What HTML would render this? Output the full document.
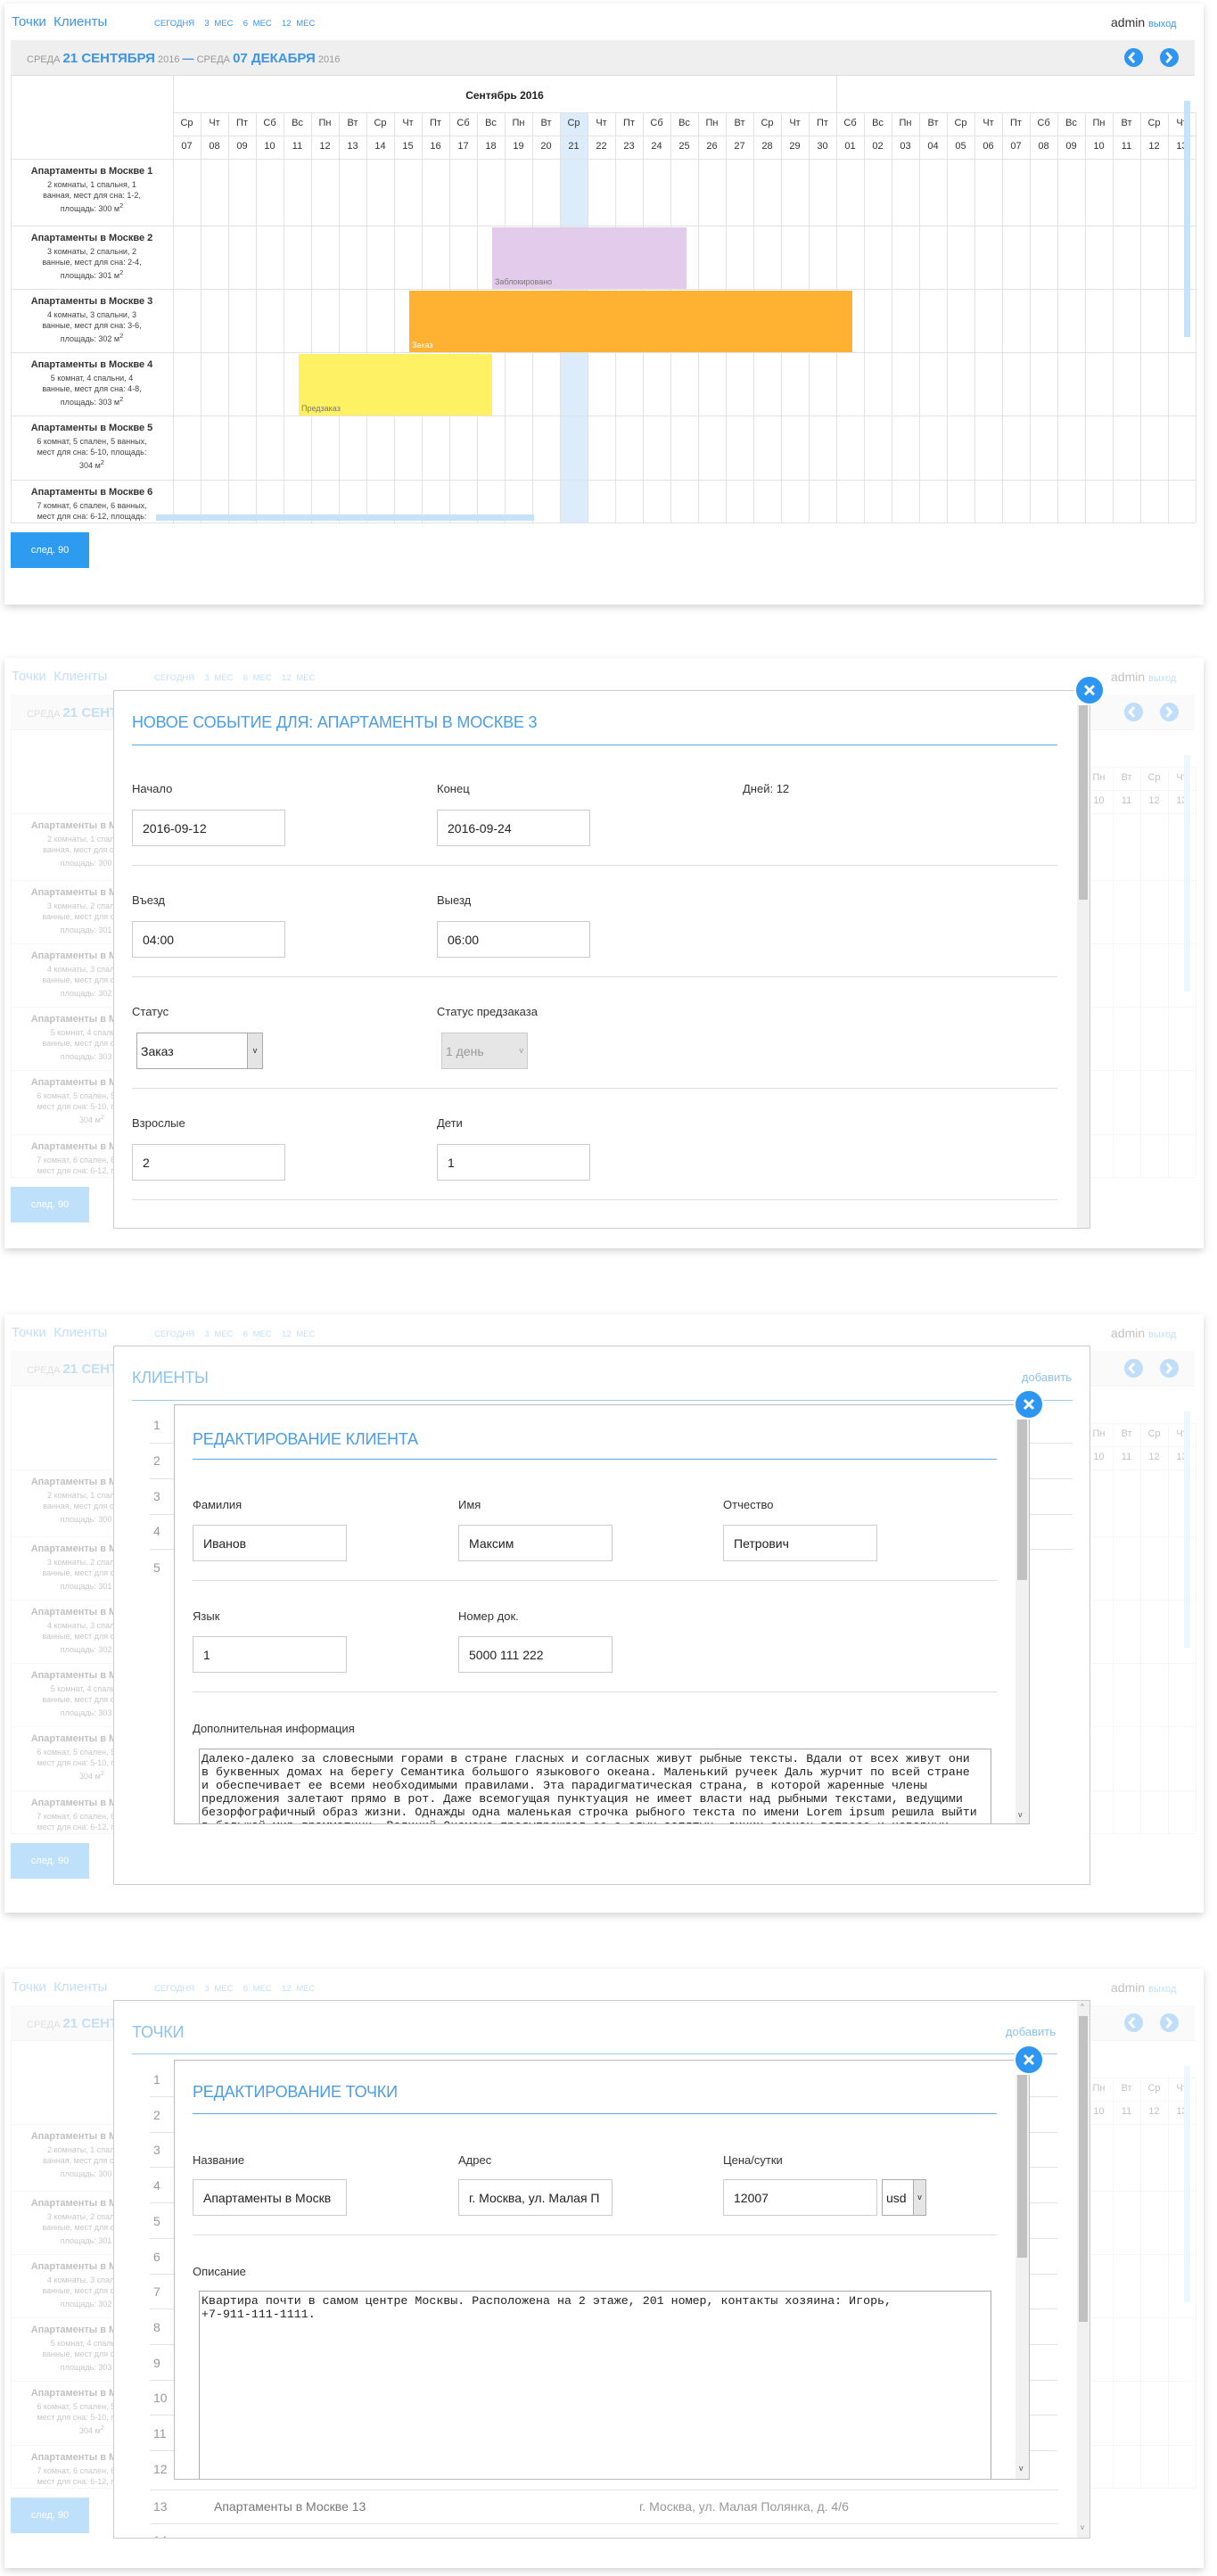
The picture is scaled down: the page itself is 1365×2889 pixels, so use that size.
<!DOCTYPE html>
<html><head><meta charset="utf-8">
<style>
*{box-sizing:border-box;margin:0;padding:0}
body{width:1365px;height:2889px;background:#fff;position:relative;overflow:hidden;font-family:"Liberation Sans","DejaVu Sans",sans-serif;color:#333}
.a{position:absolute}
.card{position:absolute;left:5px;width:1345px;background:#fff;box-shadow:0 3px 8px rgba(0,0,0,.18);overflow:hidden}
.blue{color:#3d94e6}
.lbl{position:absolute;font-size:13px;color:#333}
.inp{position:absolute;border:1px solid #ccc;background:#fff;font-size:14px;padding-left:11px;display:flex;align-items:center;color:#222;white-space:nowrap;overflow:hidden}
.sep{position:absolute;height:1px;background:#ddd}
.modal{position:absolute;background:#fff;border:1px solid #ccc}
.mt{position:absolute;font-size:18px;color:#4a9de6;font-weight:300;letter-spacing:-.2px}
.bl{position:absolute;height:1px;background:#5aa8e8}
.close{position:absolute;width:34px;height:34px;border-radius:50%;background:#2d95f2;border:2px solid #fff}
.close svg{position:absolute;left:7px;top:7px}
.sb{position:absolute;background:#f1f1f1}
.sb i{position:absolute;left:2px;right:2px;background:#c1c1c1;display:block}
.num{position:absolute;font-size:14px;color:#999;left:172px}
.nl{position:absolute;left:168px;height:1px;background:#e2e2e2}
pre{font-family:"Liberation Mono",monospace;font-size:13.3px;line-height:15px;color:#222}
</style></head><body>

<div id="c1" class="card" style="top:4px;height:674px"></div>
<div id="c2" class="card" style="top:738px;height:662px"></div>
<div id="c3" class="card" style="top:1474px;height:671px"></div>
<div id="c4" class="card" style="top:2208px;height:672px"></div>

<script>
var names=["Ср","Чт","Пт","Сб","Вс","Пн","Вт"];
var rows=[["Апартаменты в Москве 1","2 комнаты, 1 спальня, 1<br>ванная, мест для сна: 1-2,<br>площадь: 300 м<sup>2</sup>"],
["Апартаменты в Москве 2","3 комнаты, 2 спальни, 2<br>ванные, мест для сна: 2-4,<br>площадь: 301 м<sup>2</sup>"],
["Апартаменты в Москве 3","4 комнаты, 3 спальни, 3<br>ванные, мест для сна: 3-6,<br>площадь: 302 м<sup>2</sup>"],
["Апартаменты в Москве 4","5 комнат, 4 спальни, 4<br>ванные, мест для сна: 4-8,<br>площадь: 303 м<sup>2</sup>"],
["Апартаменты в Москве 5","6 комнат, 5 спален, 5 ванных,<br>мест для сна: 5-10, площадь:<br>304 м<sup>2</sup>"],
["Апартаменты в Москве 6","7 комнат, 6 спален, 6 ванных,<br>мест для сна: 6-12, площадь:<br>305 м<sup>2</sup>"]];
var rowY=[174,249,320,391,462,534,582];
function build(id,faded){
 var c=document.getElementById(id),h='';
 var op=faded?'opacity:.3;':'';
 h+='<div class="a" style="'+op+'left:0;top:0;width:1345px;height:640px">';
 h+='<div class="a blue" style="left:8px;top:12px;font-size:15px">Точки&nbsp;&nbsp;Клиенты</div>';
 h+='<div class="a blue" style="left:168px;top:17px;font-size:9.5px;word-spacing:3px;white-space:nowrap">СЕГОДНЯ&nbsp; 3 МЕС&nbsp; 6 МЕС&nbsp; 12 МЕС</div>';
 h+='<div class="a" style="left:1241px;top:13px;font-size:14px;color:#333">admin <span class="blue" style="font-size:11px">выход</span></div>';
 h+='<div class="a" style="left:7px;top:41px;width:1328px;height:40px;background:#efefef;border-bottom:1px solid #ddd"></div>';
 h+='<div class="a" style="left:25px;top:53px;font-size:11px;color:#999;white-space:nowrap">СРЕДА <b class="blue" style="font-size:15px">21 СЕНТЯБРЯ</b> 2016 <b class="blue" style="font-size:13px">—</b> СРЕДА <b class="blue" style="font-size:15px">07 ДЕКАБРЯ</b> 2016</div>';
 ['M9 4L5 8.5 9 13','M6 4l4 4.5L6 13'].forEach(function(p,i){h+='<svg class="a" style="left:'+(1256+i*40)+'px;top:50px" width="21" height="21" viewBox="0 0 17 17"><circle cx="8.5" cy="8.5" r="8.5" fill="#2d95f2"/><path d="'+p+'" stroke="#fff" stroke-width="2.4" fill="none"/></svg>';});
 var gl=189;
 h+='<div class="a" style="left:'+(gl+434)+'px;top:122px;width:31px;height:460px;background:#dcecfb"></div>';
 for(var i=0;i<=37;i++){var x=gl+i*31;h+='<div class="a" style="left:'+x+'px;top:'+(i==24||i==0?81:122)+'px;width:1px;height:'+(582-(i==24||i==0?81:122))+'px;background:#e2e2e2"></div>';}
 h+='<div class="a" style="left:7px;top:81px;width:1px;height:501px;background:#e2e2e2"></div>';
 [122,148,174].forEach(function(y){h+='<div class="a" style="left:'+gl+'px;top:'+y+'px;width:1147px;height:1px;background:#e2e2e2"></div>';});
 rowY.forEach(function(y){h+='<div class="a" style="left:7px;top:'+y+'px;width:1329px;height:1px;background:#e2e2e2"></div>';});
 h+='<div class="a" style="left:547px;top:251px;width:218px;height:69px;background:#e3cbec"></div><div class="a" style="left:550px;top:307px;font-size:9px;color:#777">Заблокировано</div>';
 h+='<div class="a" style="left:454px;top:322px;width:497px;height:69px;background:#ffb132"></div><div class="a" style="left:457px;top:378px;font-size:9px;color:#fff">Заказ</div>';
 h+='<div class="a" style="left:330px;top:393px;width:217px;height:69px;background:#fff064"></div><div class="a" style="left:333px;top:449px;font-size:9px;color:#777">Предзаказ</div>';
 h+='<div class="a" style="left:'+gl+'px;top:96px;width:744px;text-align:center;font-size:12px;font-weight:bold;color:#222">Сентябрь 2016</div>';
 for(var i=0;i<37;i++){var d=i<24?i+7:i-23;d=(d<10?'0':'')+d;var x=gl+i*31;
  h+='<div class="a" style="left:'+x+'px;top:128px;width:31px;text-align:center;font-size:11px">'+names[i%7]+'</div>';
  h+='<div class="a" style="left:'+x+'px;top:154px;width:31px;text-align:center;font-size:11px">'+d+'</div>';}
 rows.forEach(function(r,k){h+='<div class="a" style="left:7px;top:'+(rowY[k]+8)+'px;width:182px;text-align:center;line-height:12px;height:'+(rowY[k+1]-rowY[k]-8)+'px;overflow:hidden"><div style="font-size:11px;font-weight:bold;color:#333;margin-bottom:3px">'+r[0]+'</div><div style="font-size:9px;color:#444;line-height:12px">'+r[1]+'</div></div>';});
 h+='<div class="a" style="left:170px;top:573px;width:424px;height:7px;background:#c5e2fb"></div>';
 h+='<div class="a" style="left:1323px;top:109px;width:7px;height:265px;background:#c5e2fb"></div>';
 h+='<div class="a" style="left:7px;top:593px;width:88px;height:40px;background:#2d9bf0;color:#fff;font-size:11px;display:flex;align-items:center;justify-content:center">след. 90</div>';
 h+='</div>';
 c.innerHTML=h;
}
build('c1',false);build('c2',true);build('c3',true);build('c4',true);
</script>

<div class="modal" style="left:127px;top:774px;width:1096px;height:604px">
 <div class="mt" style="left:20px;top:25px">НОВОЕ СОБЫТИЕ ДЛЯ: АПАРТАМЕНТЫ В МОСКВЕ 3</div>
 <div class="bl" style="left:20px;top:60px;width:1038px"></div>
 <div class="sb" style="left:1080px;top:16px;width:14px;height:586px"><i style="top:0;height:218px"></i></div>
</div>
<div class="lbl" style="left:148px;top:877px">Начало</div>
<div class="lbl" style="left:490px;top:877px">Конец</div>
<div class="lbl" style="left:833px;top:877px">Дней: 12</div>
<div class="inp" style="left:148px;top:908px;width:172px;height:41px">2016-09-12</div>
<div class="inp" style="left:490px;top:908px;width:172px;height:41px">2016-09-24</div>
<div class="sep" style="left:148px;top:970px;width:1038px"></div>
<div class="lbl" style="left:148px;top:1002px">Въезд</div>
<div class="lbl" style="left:490px;top:1002px">Выезд</div>
<div class="inp" style="left:148px;top:1033px;width:172px;height:41px">04:00</div>
<div class="inp" style="left:490px;top:1033px;width:172px;height:41px">06:00</div>
<div class="sep" style="left:148px;top:1095px;width:1038px"></div>
<div class="lbl" style="left:148px;top:1127px">Статус</div>
<div class="lbl" style="left:490px;top:1127px">Статус предзаказа</div>
<div class="inp" style="left:153px;top:1158px;width:142px;height:41px;padding-left:4px;border-color:#aaa">Заказ<span class="a" style="right:0;top:0;width:17px;height:39px;background:#e5e5e5;border-left:1px solid #aaa;font-size:9px;text-align:center;line-height:39px">v</span></div>
<div class="inp" style="left:495px;top:1158px;width:97px;height:41px;padding-left:4px;background:#e6e6e6;color:#999;border-color:#ccc">1 день<span class="a" style="right:4px;top:0;font-size:9px;line-height:39px">v</span></div>
<div class="sep" style="left:148px;top:1220px;width:1038px"></div>
<div class="lbl" style="left:148px;top:1252px">Взрослые</div>
<div class="lbl" style="left:490px;top:1252px">Дети</div>
<div class="inp" style="left:148px;top:1283px;width:172px;height:41px">2</div>
<div class="inp" style="left:490px;top:1283px;width:172px;height:41px">1</div>
<div class="sep" style="left:148px;top:1345px;width:1038px"></div>
<div class="close" style="left:1205px;top:757px"><svg width="16" height="16" viewBox="0 0 16 16"><path d="M3 3L13 13M13 3L3 13" stroke="#fff" stroke-width="3"/></svg></div>

<div class="modal" style="left:127px;top:1509px;width:1096px;height:605px">
 <div class="mt" style="left:20px;top:25px;color:#8cc2ee">КЛИЕНТЫ</div>
 <div class="a" style="right:20px;top:27px;font-size:13px;color:#8cc2ee">добавить</div>
 <div class="bl" style="left:20px;top:60px;width:1055px;background:#9dcaf0"></div>
</div>
<div class="num" style="top:1590px">1</div><div class="nl" style="top:1618px;width:1035px"></div>
<div class="num" style="top:1630px">2</div><div class="nl" style="top:1658px;width:1035px"></div>
<div class="num" style="top:1670px">3</div><div class="nl" style="top:1698px;width:1035px"></div>
<div class="num" style="top:1709px">4</div><div class="nl" style="top:1737px;width:1035px"></div>
<div class="num" style="top:1750px">5</div>
<div class="modal" style="left:195px;top:1575px;width:960px;height:471px;border-color:#bbb">
 <div class="mt" style="left:20px;top:28px">РЕДАКТИРОВАНИЕ КЛИЕНТА</div>
 <div class="bl" style="left:20px;top:60px;width:902px"></div>
 <div class="sb" style="left:943px;top:16px;width:15px;height:453px"><i style="top:0;height:180px"></i></div>
</div>
<div class="lbl" style="left:216px;top:1680px">Фамилия</div>
<div class="lbl" style="left:514px;top:1680px">Имя</div>
<div class="lbl" style="left:811px;top:1680px">Отчество</div>
<div class="inp" style="left:216px;top:1710px;width:173px;height:41px">Иванов</div>
<div class="inp" style="left:514px;top:1710px;width:173px;height:41px">Максим</div>
<div class="inp" style="left:811px;top:1710px;width:173px;height:41px">Петрович</div>
<div class="sep" style="left:216px;top:1772px;width:902px"></div>
<div class="lbl" style="left:216px;top:1805px">Язык</div>
<div class="lbl" style="left:514px;top:1805px">Номер док.</div>
<div class="inp" style="left:216px;top:1835px;width:173px;height:41px">1</div>
<div class="inp" style="left:514px;top:1835px;width:173px;height:41px">5000 111 222</div>
<div class="sep" style="left:216px;top:1897px;width:902px"></div>
<div class="lbl" style="left:216px;top:1931px">Дополнительная информация</div>
<div class="a" style="left:223px;top:1961px;width:889px;height:84px;border:1px solid #aaa;border-bottom:none;overflow:hidden;padding:3px 2px"><pre>Далеко-далеко за словесными горами в стране гласных и согласных живут рыбные тексты. Вдали от всех живут они
в буквенных домах на берегу Семантика большого языкового океана. Маленький ручеек Даль журчит по всей стране
и обеспечивает ее всеми необходимыми правилами. Эта парадигматическая страна, в которой жаренные члены
предложения залетают прямо в рот. Даже всемогущая пунктуация не имеет власти над рыбными текстами, ведущими
безорфографичный образ жизни. Однажды одна маленькая строчка рыбного текста по имени Lorem ipsum решила выйти
в большой мир грамматики. Великий Оксмокс предупреждал ее о злых запятых, диких знаках вопроса и коварных</pre></div>
<div class="a" style="left:1142px;top:2030px;font-size:9px;color:#555">v</div>
<div class="close" style="left:1137px;top:1558px"><svg width="16" height="16" viewBox="0 0 16 16"><path d="M3 3L13 13M13 3L3 13" stroke="#fff" stroke-width="3"/></svg></div>

<div class="modal" style="left:127px;top:2243px;width:1096px;height:604px;overflow:hidden">
 <div class="mt" style="left:20px;top:25px;color:#8cc2ee">ТОЧКИ</div>
 <div class="a" style="right:38px;top:27px;font-size:13px;color:#8cc2ee">добавить</div>
 <div class="bl" style="left:20px;top:59px;width:1038px;background:#9dcaf0"></div>
 <div class="sb" style="left:1080px;top:0;width:14px;height:602px"><i style="top:17px;height:343px"></i></div>
 <div class="a" style="left:1084px;top:2px;font-size:8px;color:#888">^</div>
 <div class="a" style="left:1084px;top:586px;font-size:8px;color:#888">v</div>
 <div class="a" style="left:41px;top:548px;width:1018px;height:1px;background:#e2e2e2"></div>
 <div class="a" style="left:41px;top:586px;width:1018px;height:1px;background:#e2e2e2"></div>
 <div class="a" style="left:44px;top:559px;font-size:14px;color:#999">13</div>
 <div class="a" style="left:112px;top:559px;font-size:14px;color:#777">Апартаменты в Москве 13</div>
 <div class="a" style="left:589px;top:559px;font-size:14px;color:#999">г. Москва, ул. Малая Полянка, д. 4/6</div>
 <div class="a" style="left:44px;top:597px;font-size:14px;color:#aaa">14</div>
</div>
<script>
(function(){var h='';for(var i=0;i<12;i++){var y=2324+i*39.7;h+='<div class="num" style="top:'+y+'px">'+(i+1)+'</div>';if(i<11)h+='<div class="nl" style="top:'+(y+27)+'px;width:1018px"></div>';}
document.body.insertAdjacentHTML('beforeend',h);})();
</script>
<div class="modal" style="left:195px;top:2310px;width:960px;height:471px;border-color:#bbb">
 <div class="mt" style="left:20px;top:25px">РЕДАКТИРОВАНИЕ ТОЧКИ</div>
 <div class="bl" style="left:20px;top:59px;width:902px"></div>
 <div class="sb" style="left:943px;top:16px;width:15px;height:453px"><i style="top:0;height:205px"></i></div>
 <div class="a" style="left:947px;top:452px;font-size:9px;color:#555">v</div>
</div>
<div class="lbl" style="left:216px;top:2415px">Название</div>
<div class="lbl" style="left:514px;top:2415px">Адрес</div>
<div class="lbl" style="left:811px;top:2415px">Цена/сутки</div>
<div class="inp" style="left:216px;top:2444px;width:173px;height:41px">Апартаменты в Москв</div>
<div class="inp" style="left:514px;top:2444px;width:173px;height:41px">г. Москва, ул. Малая П</div>
<div class="inp" style="left:811px;top:2444px;width:173px;height:41px">12007</div>
<div class="inp" style="left:989px;top:2444px;width:50px;height:41px;padding-left:4px;border-color:#aaa">usd<span class="a" style="right:0;top:0;width:14px;height:39px;background:#e5e5e5;border-left:1px solid #aaa;font-size:9px;text-align:center;line-height:39px">v</span></div>
<div class="sep" style="left:216px;top:2506px;width:902px"></div>
<div class="lbl" style="left:216px;top:2540px">Описание</div>
<div class="a" style="left:223px;top:2569px;width:889px;height:211px;border:1px solid #aaa;border-bottom:none;padding:3px 2px"><pre>Квартира почти в самом центре Москвы. Расположена на 2 этаже, 201 номер, контакты хозяина: Игорь,
+7-911-111-1111.</pre></div>
<div class="close" style="left:1137px;top:2293px"><svg width="16" height="16" viewBox="0 0 16 16"><path d="M3 3L13 13M13 3L3 13" stroke="#fff" stroke-width="3"/></svg></div>

</body></html>
